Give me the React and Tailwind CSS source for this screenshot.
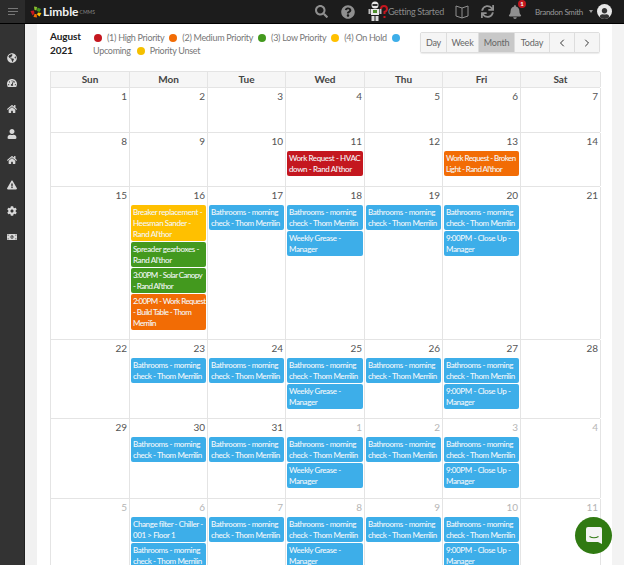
import { ChevronLeft, ChevronRight } from 'lucide-react';
import {
  FaBell, FaCog, FaExclamationTriangle, FaGlobeAmericas, FaHome, FaMoneyBillAlt,
  FaQuestionCircle, FaSearch, FaSync, FaTachometerAlt, FaUser,
} from 'react-icons/fa';

const BLUE = 'bg-[#3daee9]';
const RED = 'bg-[#c4171f]';
const ORANGE = 'bg-[#f26c05]';
const GREEN = 'bg-[#43991e]';
const YELLOW = 'bg-[#ffc000]';
const TIGHT = 'tracking-[-0.6px]';

const bath = { text: 'Bathrooms - morning\ncheck - Thom Merrilin', color: BLUE, h: 'h-[25px]' };
const grease = { text: 'Weekly Grease -\nManager', color: BLUE, h: 'h-[25px]' };
const closeUp = { text: '9:00PM - Close Up -\nManager', color: BLUE, h: 'h-[25px]' };

const ROWS = [
  {
    height: 'h-[45px]',
    days: [{ n: 1 }, { n: 2 }, { n: 3 }, { n: 4 }, { n: 5 }, { n: 6 }, { n: 7 }],
  },
  {
    height: 'h-[54px]',
    days: [
      { n: 8 }, { n: 9 }, { n: 10 },
      { n: 11, events: [{ text: 'Work Request - HVAC\ndown - Rand Al\'thor', color: RED, h: 'h-[25px]' }] },
      { n: 12 },
      { n: 13, events: [{ text: 'Work Request - Broken\nLight - Rand Al\'thor', color: ORANGE, h: 'h-[25px]', track: TIGHT }] },
      { n: 14 },
    ],
  },
  {
    height: 'h-[153px]',
    days: [
      { n: 15 },
      {
        n: 16,
        events: [
          { text: 'Breaker replacement -\nHeesman Sander -\nRand Al\'thor', color: YELLOW, h: 'h-[36px]' },
          { text: 'Spreader gearboxes -\nRand Al\'thor', color: GREEN, h: 'h-[25px]' },
          { text: '3:00PM - Solar Canopy\n- Rand Al\'thor', color: GREEN, h: 'h-[25px]', track: TIGHT },
          { text: '2:00PM - Work Request\n- Build Table - Thom\nMerrilin', color: ORANGE, h: 'h-[36px]', track: TIGHT },
        ],
      },
      { n: 17, events: [bath] },
      { n: 18, events: [bath, grease] },
      { n: 19, events: [bath] },
      { n: 20, events: [bath, closeUp] },
      { n: 21 },
    ],
  },
  {
    height: 'h-[79px]',
    days: [
      { n: 22 },
      { n: 23, events: [bath] },
      { n: 24, events: [bath] },
      { n: 25, events: [bath, grease] },
      { n: 26, events: [bath] },
      { n: 27, events: [bath, closeUp] },
      { n: 28 },
    ],
  },
  {
    height: 'h-[80px]',
    days: [
      { n: 29 },
      { n: 30, events: [bath] },
      { n: 31, events: [bath] },
      { n: 1, muted: true, events: [bath, grease] },
      { n: 2, muted: true, events: [bath] },
      { n: 3, muted: true, events: [bath, closeUp] },
      { n: 4, muted: true },
    ],
  },
  {
    height: 'h-[80px]',
    days: [
      { n: 5, muted: true },
      {
        n: 6,
        muted: true,
        events: [{ text: 'Change filter - Chiller -\n001 > Floor 1', color: BLUE, h: 'h-[25px]' }, bath],
      },
      { n: 7, muted: true, events: [bath] },
      { n: 8, muted: true, events: [bath, grease] },
      { n: 9, muted: true, events: [bath] },
      { n: 10, muted: true, events: [bath, closeUp] },
      { n: 11, muted: true },
    ],
  },
];

const LEGEND = [
  { label: '(1) High Priority', color: 'bg-[#c4171f]' },
  { label: '(2) Medium Priority', color: 'bg-[#f26c05]' },
  { label: '(3) Low Priority', color: 'bg-[#43991e]' },
  { label: '(4) On Hold', color: 'bg-[#ffc000]' },
];

const GRID = 'grid grid-cols-[79px_78px_78px_79px_78px_78px_80px]';

function Logo() {
  return (
    <svg width="12" height="12" viewBox="0 0 12 12">
      <path d="M4 0.500 L7 1 L6.500 4.500 L4.500 4 Z" fill="#8bbf2f" />
      <path d="M7.500 1.500 L11 3 L9.500 6 L7 5 Z" fill="#43991e" />
      <path d="M8 6.500 L11.500 7 L9.500 10.500 L7 8.500 Z" fill="#ffc000" />
      <path d="M3.500 11 L7 11.500 L6.500 8 L4.500 8 Z" fill="#f26c05" />
      <path d="M0.500 5 L4 4.500 L4.500 7.500 L2.500 9.500 Z" fill="#c4171f" />
    </svg>
  );
}

function Robot() {
  return (
    <svg width="20" height="21" viewBox="0 0 20 21">
      <circle cx="7" cy="4" r="3.500" fill="#e8e8e8" />
      <rect x="4.500" y="3" width="5" height="2" fill="#333" />
      <rect x="3" y="8" width="8" height="6" fill="#e8e8e8" />
      <rect x="5" y="9" width="4" height="3" fill="#4d8f2c" />
      <rect x="0.500" y="8" width="2" height="5" fill="#bbb" />
      <rect x="11.500" y="8" width="2" height="5" fill="#bbb" />
      <rect x="3.500" y="15" width="3" height="5" fill="#d8d8d8" />
      <rect x="7.500" y="15" width="3" height="5" fill="#d8d8d8" />
      <path d="M13 8 Q13 5 16 5 Q19 5 19 8 Q19 10 16.500 11 L16.500 13" fill="none" stroke="#c4171f" strokeWidth="2" />
      <rect x="15.500" y="15" width="2" height="2" fill="#c4171f" />
    </svg>
  );
}

function TopBar() {
  return (
    <header className="h-[24px] shrink-0 bg-[#1c1c1c] border-b border-black flex items-center text-[#8f8f8f]">
      <div className="w-[25px] h-full bg-[#2b2b2b] flex flex-col items-center justify-center gap-[2px]">
        <span className="w-[10px] h-px bg-[#777]" />
        <span className="w-[10px] h-px bg-[#777]" />
        <span className="w-[7px] h-px bg-[#777] mr-[3px]" />
      </div>
      <div className="ml-[5px] flex items-center gap-[1px]">
        <Logo />
        <span className="text-[12px] font-bold text-[#f2f2f2] leading-none">Limble</span>
        <span className="text-[5px] text-[#888] mt-[3px]">CMMS</span>
      </div>
      <div className="ml-auto flex items-center">
        <FaSearch size={13} className="mr-[13px]" />
        <FaQuestionCircle size={14} className="mr-[13px]" />
        <Robot />
        <span className="text-[9px] tracking-[-0.3px] text-[#8a8a8a] mr-[11px]">Getting Started</span>
        <svg width="14" height="16" viewBox="0 0 14 16" className="mr-[12px]" fill="none" stroke="#8f8f8f">
          <path d="M1 2 L7 4 L13 2 L13 12 L7 14 L1 12 Z" />
          <path d="M7 4 V14" />
        </svg>
        <FaSync size={13} className="mr-[14px]" />
        <div className="relative mr-[13px]">
          <FaBell size={14} />
          <span className="absolute -top-[5px] -right-[4px] w-[8px] h-[8px] rounded-full bg-[#c4171f] text-white text-[6px] font-bold leading-[8px] text-center">1</span>
        </div>
        <span className="text-[8px] tracking-[-0.3px] text-[#999]">Brandon Smith</span>
        <span className="ml-[6px] w-0 h-0 border-x-[2.500px] border-x-transparent border-t-[3px] border-t-[#999]" />
        <div className="ml-[4px] mr-[12px] w-[15px] h-[15px] rounded-full bg-[#e6e6e6] flex items-end justify-center overflow-hidden">
          <FaUser size={11} className="text-[#333]" />
        </div>
      </div>
    </header>
  );
}

function Sidebar() {
  const icons = [FaGlobeAmericas, FaTachometerAlt, FaHome, FaUser, FaHome, FaExclamationTriangle, FaCog, FaMoneyBillAlt];
  return (
    <aside className="w-[25px] shrink-0 bg-[#333333] border-r border-[#222] flex flex-col items-center pt-[29px] gap-[16.600px] text-[#d8d8d8]">
      {icons.map((Icon, i) => (
        <div key={i} className="h-[9px] flex items-center justify-center">
          <Icon size={10} />
        </div>
      ))}
    </aside>
  );
}

function EventChip({ ev }) {
  return (
    <div className={`${ev.color} ${ev.h} ${ev.track || 'tracking-[-0.4px]'} rounded-[2px] pl-[2px] py-[1.500px] text-[8px] leading-[11px] font-medium text-[#f4f8fb] whitespace-pre overflow-hidden`}>
      {ev.text}
    </div>
  );
}

function DayCell({ day }) {
  return (
    <div className="h-full overflow-hidden border-r border-[#e4e4e4]">
      <div className={`h-[18px] pr-[2px] pt-[1px] text-right text-[10px] leading-[14px] ${day.muted ? 'text-[#b5b5b5]' : 'text-[#555]'}`}>
        {day.n}
      </div>
      <div className="pl-[1px] pr-[1px] flex flex-col gap-[1px]">
        {(day.events || []).map((ev, i) => <EventChip key={i} ev={ev} />)}
      </div>
    </div>
  );
}

function Toolbar() {
  const btn = 'h-full flex items-center justify-center border-r border-[#ddd]';
  return (
    <div className="h-[21px] flex rounded-[2px] border border-[#dedede] text-[9px] tracking-[-0.2px] text-[#666] shadow-[0_1px_1px_rgba(0,0,0,0.08)]">
      <div className={`${btn} bg-[#f5f5f5] w-[26px]`}>Day</div>
      <div className={`${btn} bg-[#f5f5f5] w-[32px]`}>Week</div>
      <div className={`${btn} bg-[#c8c8c8] w-[36px]`}>Month</div>
      <div className={`${btn} bg-[#f5f5f5] w-[35px]`}>Today</div>
      <div className={`${btn} bg-[#f5f5f5] w-[25px] text-[#333]`}><ChevronLeft size={12} /></div>
      <div className="h-full flex items-center justify-center bg-[#f5f5f5] w-[24px] text-[#333]"><ChevronRight size={12} /></div>
    </div>
  );
}

export default function App() {
  return (
    <div className="relative w-[624px] h-[565px] overflow-hidden flex flex-col bg-[#f3f3f3] font-['Lato','Open_Sans',sans-serif]">
      <TopBar />
      <div className="flex flex-1 min-h-0">
        <Sidebar />
        <div className="w-[12px] shrink-0 bg-[#f1f1f1]" />
        <main className="w-[575px] shrink-0 bg-white pl-[13px] pr-[12px] overflow-hidden">
          <div className="h-[47px] flex items-start pt-[8px]">
            <div className="w-[43px] shrink-0 -mt-[3px] text-[10px] tracking-[-0.1px] leading-[14px] font-bold text-[#222]">
              August 2021
            </div>
            <div className="w-[327px] shrink-0 -mt-[1px] text-[9px] tracking-[-0.3px] leading-[13px] text-[#777] flex flex-wrap items-center">
              {LEGEND.map(l => (
                <span key={l.label} className="flex items-center">
                  <span className={`${l.color} w-[8px] h-[8px] rounded-full ml-[1px] mr-[5px]`} />
                  <span className="mr-[4px]">{l.label}</span>
                </span>
              ))}
              <span className="bg-[#3daee9] w-[8px] h-[8px] rounded-full ml-[1px]" />
              <span className="w-full flex items-center">
                <span className="mr-[6px]">Upcoming</span>
                <span className="bg-[#f5c000] w-[8px] h-[8px] rounded-full mr-[5px]" />
                Priority Unset
              </span>
            </div>
            <div className="ml-auto"><Toolbar /></div>
          </div>
          <div className="border-t border-l border-[#e4e4e4]">
            <div className={`${GRID} h-[16px] bg-[#f6f6f6] border-b border-[#e4e4e4]`}>
              {['Sun', 'Mon', 'Tue', 'Wed', 'Thu', 'Fri', 'Sat'].map(d => (
                <div key={d} className="text-center text-[10px] leading-[15px] font-bold text-[#444] border-r border-[#e4e4e4]">{d}</div>
              ))}
            </div>
            {ROWS.map((row, r) => (
              <div key={r} className={`${GRID} ${row.height} border-b border-[#e4e4e4]`}>
                {row.days.map((day, i) => <DayCell key={i} day={day} />)}
              </div>
            ))}
          </div>
        </main>
      </div>
      {/* chat launcher sits over the page */}
      <div className="absolute left-[575px] top-[517px] w-[37px] h-[37px] rounded-full bg-[#307a12] flex items-center justify-center">
        <svg width="18" height="20" viewBox="0 0 18 20">
          <path d="M3 1 H15 Q17 1 17 3 V18 L13 16 H3 Q1 16 1 14 V3 Q1 1 3 1 Z" fill="#f4f4f4" />
          <path d="M4.500 10.500 Q9 13 13.500 10.500" fill="none" stroke="#307a12" strokeWidth="1.200" />
        </svg>
      </div>
    </div>
  );
}
